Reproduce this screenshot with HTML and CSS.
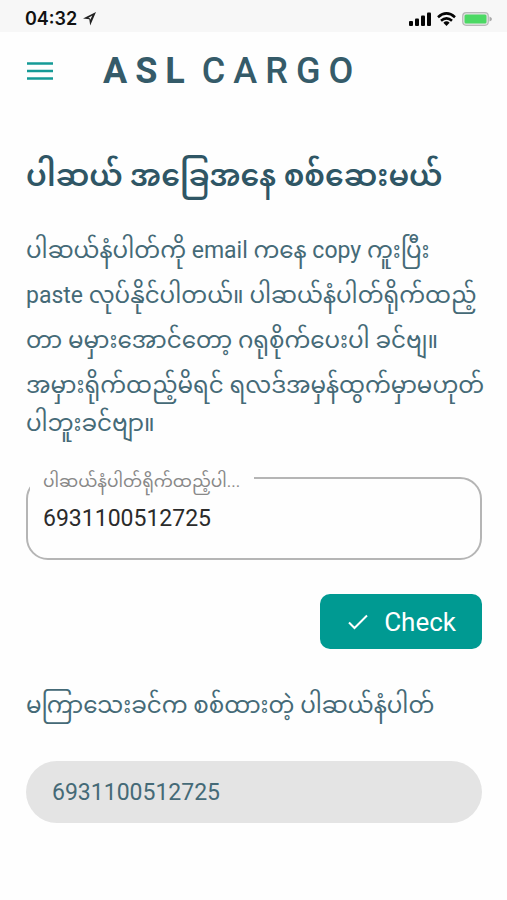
FILE: index.html
```html
<!DOCTYPE html>
<html lang="my">
<head>
<meta charset="utf-8">
<meta name="viewport" content="width=device-width, initial-scale=1">
<title>ASL CARGO</title>
<link rel="stylesheet" href="styles.css">
</head>
<body>
<div class="status">
  <div class="status-group">
    <span class="time">04:32</span>
    <svg width="13" height="14" viewBox="0 0 13 14" aria-hidden="true"><path fill-rule="evenodd" d="M13 0 0 6.500 6.300 7.200 7.200 13.500zM9.300 3.500 7.300 7.800 6.900 6.200 5.200 6z" fill="#222"/></svg>
  </div>
  <div class="status-group">
    <svg width="22" height="14" viewBox="0 0 22 14" aria-hidden="true"><g fill="#050505"><rect x="0" y="9" width="4" height="5" rx="1"/><rect x="6" y="6.500" width="4" height="7.500" rx="1"/><rect x="12" y="3.500" width="4" height="10.500" rx="1"/><rect x="18" y="0.500" width="4" height="13.500" rx="1"/></g></svg>
    <svg width="19" height="14" viewBox="0 0 19 14" aria-hidden="true"><g fill="none" stroke="#050505" stroke-width="2.600"><path d="M1 5.200Q9.500-2.400 18 5.200"/><path d="M4 8.700Q9.500 3.900 15 8.700"/></g><path d="M6.400 10.700Q9.500 8 12.600 10.700L9.500 14z" fill="#050505"/></svg>
    <svg width="30" height="14" viewBox="0 0 30 14" aria-hidden="true"><rect x=".7" y=".7" width="25.600" height="12.600" rx="3.500" fill="#e4e4e4" stroke="#b9b9b9" stroke-width="1.200"/><rect x="2.500" y="2.500" width="22" height="9" rx="1.500" fill="#4cd964"/><path d="M27.500 4.500q2.500 1 2.500 2.500t-2.500 2.500z" fill="#aaa"/></svg>
  </div>
</div>
<header class="bar">
  <button class="menu" type="button" aria-label="Menu">
    <svg width="26" height="18" viewBox="0 0 26 18"><path d="M0 1.500h26M0 9h26M0 16.500h26" stroke="#159a96" stroke-width="2.600"/></svg>
  </button>
  <div class="brand"><b>ASL</b><span>CARGO</span></div>
</header>
<main class="content">
  <h1>ပါဆယ် အခြေအနေ စစ်ဆေးမယ်</h1>
  <p class="intro">
    <span class="line">ပါဆယ်နံပါတ်ကို email ကနေ copy ကူးပြီး</span>
    <span class="line">paste လုပ်နိုင်ပါတယ်။ ပါဆယ်နံပါတ်ရိုက်ထည့်</span>
    <span class="line">တာ မမှားအောင်တော့ ဂရုစိုက်ပေးပါ ခင်ဗျ။</span>
    <span class="line">အမှားရိုက်ထည့်မိရင် ရလဒ်အမှန်ထွက်မှာမဟုတ်</span>
    <span class="line last">ပါဘူးခင်ဗျာ။</span>
  </p>
  <form class="form">
    <div class="field">
      <label for="parcel">ပါဆယ်နံပါတ်ရိုက်ထည့်ပါ...</label>
      <input id="parcel" type="text" inputmode="numeric" value="6931100512725">
    </div>
    <button class="check" type="button">
      <svg width="20" height="16" viewBox="0 0 20 16" aria-hidden="true"><path d="M1 8.500 6.500 14 19 1.500" fill="none" stroke="#fff" stroke-width="2"/></svg>
      Check
    </button>
  </form>
  <h2>မကြာသေးခင်က စစ်ထားတဲ့ ပါဆယ်နံပါတ်</h2>
  <button class="recent" type="button">6931100512725</button>
</main>
</body>
</html>
```
FILE: styles.css
```css
* {
  box-sizing: border-box;
}

body {
  margin: 0;
  background: #fefefe;
  color: #456a77;
  font-family: Roboto, "Noto Sans Myanmar", "Noto Sans", sans-serif;
}

button,
input {
  font: inherit;
}

.status {
  display: flex;
  justify-content: space-between;
  align-items: center;
  height: 32px;
  padding: 6px 15px 0 25px;
  background: #f7f7f7;
}

.status-group {
  display: flex;
  align-items: center;
  gap: 6px;
}

.time {
  color: #111;
  font: 600 18px/24px Inter, sans-serif;
}

.bar {
  display: flex;
  align-items: center;
  gap: 50px;
  height: 78px;
  padding: 0 27px;
}

.menu {
  display: flex;
  padding: 0;
  border: 0;
  background: none;
}

.brand {
  display: flex;
  gap: 9px;
  color: #355b69;
  font-size: 36px;
  font-weight: 500;
  line-height: 42px;
  letter-spacing: 8px;
}

.content {
  padding: 40px 25px 40px 26px;
}

h1 {
  margin: 0 0 26px;
  color: #2f5665;
  font-size: 30px;
  font-weight: 600;
  line-height: 52px;
  white-space: nowrap;
}

.intro {
  margin: 0;
  font-size: 23px;
}

.line {
  display: block;
  line-height: 45px;
  white-space: nowrap;
}

.last {
  line-height: 32px;
}

.form {
  display: flex;
  flex-direction: column;
  align-items: flex-end;
  gap: 34px;
  margin: 37px 0 30px;
}

.field {
  position: relative;
  width: 100%;
}

.field label {
  position: absolute;
  top: -8px;
  left: 4px;
  width: 224px;
  padding-left: 13px;
  background: #fefefe;
  color: #888;
  font-size: 17px;
  line-height: 24px;
  white-space: nowrap;
}

.field input {
  display: block;
  width: 100%;
  height: 83px;
  padding: 0 15px;
  border: 2px solid #b5b5b5;
  border-radius: 22px;
  background: none;
  color: #2b2b2b;
  font-size: 23px;
}

.check {
  display: flex;
  align-items: center;
  gap: 16px;
  height: 55px;
  padding: 0 26px 0 28px;
  border: 0;
  border-radius: 10px;
  background: #009a92;
  color: #fff;
  font-size: 26px;
}

h2 {
  margin: 0 0 28px;
  font-size: 23px;
  font-weight: 400;
  line-height: 54px;
  white-space: nowrap;
}

.recent {
  display: block;
  width: 100%;
  height: 62px;
  padding: 0 26px;
  border: 0;
  border-radius: 31px;
  background: #e4e4e4;
  color: #456a77;
  font-size: 23px;
  text-align: left;
}
```
